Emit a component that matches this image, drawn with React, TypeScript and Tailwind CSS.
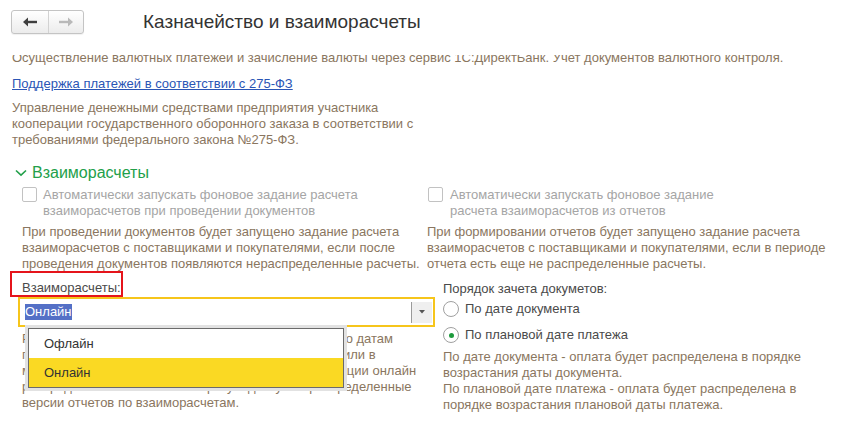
import React from 'react';

const Arrow = ({ dir, color }: { dir: 'left' | 'right'; color: string }) => (
  <svg width="14" height="10" viewBox="0 0 14 10" className={dir === 'right' ? 'rotate-180' : ''}>
    <path d="M0 5 L5 0.5 L5 9.5 Z" fill={color} />
    <rect x="4" y="3.8" width="10" height="2.4" fill={color} />
  </svg>
);

const Checkbox = () => (
  <div className="w-[15px] h-[15px] shrink-0 rounded-[2px] border border-[#c2c2c2] bg-white" />
);

const Radio = ({ checked }: { checked?: boolean }) => (
  <div className="w-[16px] h-[16px] shrink-0 rounded-full border border-[#a0a0a0] bg-white flex items-center justify-center">
    {checked && <div className="w-[5px] h-[5px] rounded-full bg-[#1d9a3c]" />}
  </div>
);

export default function App() {
  return (
    <div className="w-[844px] h-[424px] overflow-hidden bg-white font-['Liberation_Sans',Arial,sans-serif] text-[13px] leading-[16px]">
      {/* Header */}
      <div className="h-[55px] flex items-start pt-[10px] pl-[11px] relative z-10 bg-white">
        <div className="flex h-[24px] w-[73px] rounded-[3px] border border-[#c4c4c4] bg-gradient-to-b from-white to-[#ececec] shadow-[0_1px_1px_rgba(0,0,0,0.06)]">
          <div className="w-[37px] flex items-center justify-center border-r border-[#d2d2d2]">
            <Arrow dir="left" color="#3f3f3f" />
          </div>
          <div className="flex-1 flex items-center justify-center">
            <Arrow dir="right" color="#b9b9b9" />
          </div>
        </div>
        <h1 className="ml-[59px] mt-[1px] text-[19px] leading-[22px] text-[#333]">Казначейство и взаиморасчеты</h1>
      </div>

      {/* Content */}
      <div className="h-[369px] overflow-hidden pl-[12px]">
        <p className="-mt-[5px] text-[#8a7660]">
          Осуществление валютных платежей и зачисление валюты через сервис 1С:ДиректБанк. Учет документов валютного контроля.
        </p>
        <a className="block mt-[10px] text-[#2a55b5] underline w-fit">Поддержка платежей в соответствии с 275-ФЗ</a>
        <p className="mt-[8px] text-[#8a7660]">
          Управление денежными средствами предприятия участника<br />
          кооперации государственного оборонного заказа в соответствии с<br />
          требованиями федерального закона №275-ФЗ.
        </p>

        {/* Section */}
        <div className="mt-[15px] flex items-center h-[20px]">
          <svg width="12" height="8" viewBox="0 0 12 8" className="ml-[3px]">
            <path d="M1 1.5 L6 6.2 L11 1.5" fill="none" stroke="#22a04a" strokeWidth="1.6" />
          </svg>
          <span className="ml-[5px] text-[16px] leading-[20px] text-[#22a04a]">Взаиморасчеты</span>
        </div>

        <div className="pl-[10px]">
          <div className="mt-[4px] grid grid-cols-[405px_1fr]">
            <div>
              <div className="flex gap-[6px]">
                <Checkbox />
                <span className="text-[#a5a5a5]">
                  Автоматически запускать фоновое задание расчета<br />
                  взаиморасчетов при проведении документов
                </span>
              </div>
              <p className="mt-[5px] text-[#8a7660]">
                При проведении документов будет запущено задание расчета<br />
                взаиморасчетов с поставщиками и покупателями, если после<br />
                проведения документов появляются нераспределенные расчеты.
              </p>
            </div>
            <div>
              <div className="flex gap-[7px] pl-[1px]">
                <Checkbox />
                <span className="text-[#a5a5a5]">
                  Автоматически запускать фоновое задание<br />
                  расчета взаиморасчетов из отчетов
                </span>
              </div>
              <p className="mt-[5px] text-[#8a7660]">
                При формировании отчетов будет запущено задание расчета<br />
                взаиморасчетов с поставщиками и покупателями, если в периоде<br />
                отчета есть еще не распределенные расчеты.
              </p>
            </div>
          </div>

          <div className="mt-[8px] flex">
            {/* Left: field */}
            <div className="w-[417px] -ml-[4px]">
              <div className="pl-[4px]">
                <span className="relative text-[#4a4a4a]">
                  Взаиморасчеты:
                  <span className="absolute -left-[12px] -top-[9px] w-[113px] h-[26px] border-2 border-[#e5141b]" />
                </span>
              </div>
              <div className="relative mt-[1px]">
                <div className="h-[30px] border-2 border-[#f6c51b] flex items-center pl-[5px] pr-[1px]">
                  <span className="bg-[#5470c6] text-white leading-[16px]">Онлайн</span>
                  <div className="ml-auto h-[21px] w-[21px] border-l border-[#9a9a9a] bg-[#efefef] flex items-center justify-center">
                    <svg width="6" height="4" viewBox="0 0 6 4">
                      <path d="M0 0 L6 0 L3 3.5 Z" fill="#555" />
                    </svg>
                  </div>
                </div>
                <p className="mt-[4px] pl-[4px] text-[#8a7660]">
                  Режим определяет, выполняется ли распределение по датам<br />
                  погашения немедленно при проведении документов или в<br />
                  момент формирования отчетов. В случае синхронизации онлайн<br />
                  распределение выполняется сразу и доступны распределенные<br />
                  версии отчетов по взаиморасчетам.
                </p>

                {/* Dropdown list */}
                <div className="absolute left-[7px] top-[28px] w-[322px] border-[3px] border-[#e2e2e2] bg-white">
                  <div className="border border-[#6b6b6b] bg-white">
                    <div className="h-[29px] flex items-center pl-[15px] text-[#333]">Офлайн</div>
                    <div className="h-[29px] flex items-center pl-[15px] bg-[#fad923] text-[#333]">Онлайн</div>
                  </div>
                </div>
              </div>
            </div>

            {/* Right: radios */}
            <div className="ml-[8px] pt-[1px]">
              <div className="text-[#4a4a4a]">Порядок зачета докуметов:</div>
              <div className="mt-[4px] flex items-center gap-[6px] h-[16px]">
                <Radio />
                <span className="text-[#4a4a4a]">По дате документа</span>
              </div>
              <div className="mt-[10px] flex items-center gap-[6px] h-[16px]">
                <Radio checked />
                <span className="text-[#4a4a4a]">По плановой дате платежа</span>
              </div>
              <p className="mt-[6px] text-[#8a7660]">
                По дате документа - оплата будет распределена в порядке<br />
                возрастания даты документа.<br />
                По плановой дате платежа - оплата будет распределена в<br />
                порядке возрастания плановой даты платежа.
              </p>
            </div>
          </div>
        </div>
      </div>
    </div>
  );
}
